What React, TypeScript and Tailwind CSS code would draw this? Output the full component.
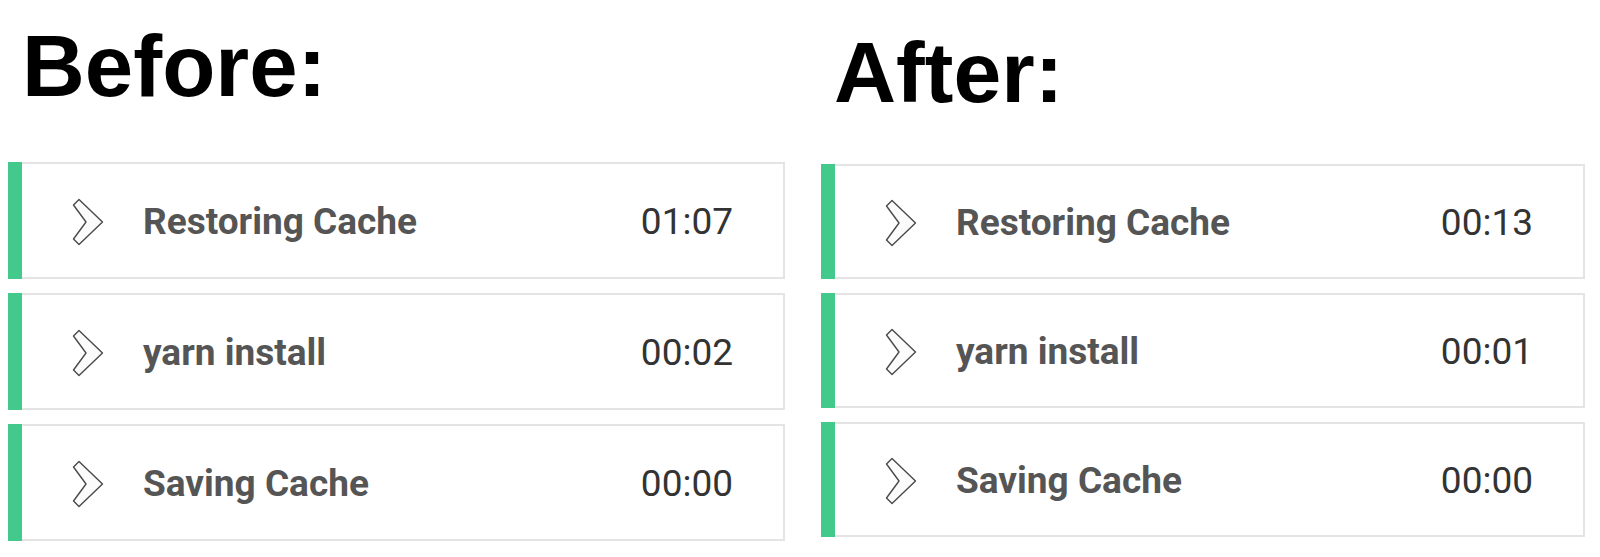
import React from 'react';

interface Step {
  name: string;
  time: string;
}

const before: Step[] = [
  { name: 'Restoring Cache', time: '01:07' },
  { name: 'yarn install', time: '00:02' },
  { name: 'Saving Cache', time: '00:00' },
];

const after: Step[] = [
  { name: 'Restoring Cache', time: '00:13' },
  { name: 'yarn install', time: '00:01' },
  { name: 'Saving Cache', time: '00:00' },
];

const Chevron: React.FC = () => (
  <svg width="32" height="48" viewBox="0 0 32 48" className="shrink-0">
    <polygon
      points="1.5,7 7,1.5 30.5,24 7,46.5 1.5,41 14,24"
      fill="#fbfbfb"
      stroke="#4a4a4a"
      strokeWidth="1.4"
      strokeLinejoin="round"
    />
  </svg>
);

const StepRow: React.FC<{ step: Step; tall: boolean }> = ({ step, tall }) => (
  <div className={`flex ${tall ? 'h-[117px]' : 'h-[115px]'}`}>
    <div className="w-[14px] shrink-0 bg-[#43c98b]" />
    <div className="flex flex-1 items-center border-y-2 border-r-2 border-[#e4e4e4] bg-white pl-[50px] pr-[50px] pt-[3px]">
      <Chevron />
      <span className="ml-[39px] flex-1 text-[37px] font-bold text-[#555555] [font-family:Roboto,sans-serif]">
        {step.name}
      </span>
      <span className="text-[37px] text-[#333333] [font-family:Roboto,sans-serif]">{step.time}</span>
    </div>
  </div>
);

const App: React.FC = () => {
  return (
    <div className="flex h-[557px] w-[1600px] bg-white">
      <div className="ml-[8px] w-[777px]">
        <h1 className="mt-[22px] pl-[14px] text-[87px] font-bold leading-none text-black [font-family:'Liberation_Sans',Arial,sans-serif]">
          Before:
        </h1>
        <div className="mt-[53px] flex flex-col gap-[14px]">
          {before.map((s) => (
            <StepRow key={s.name} step={s} tall />
          ))}
        </div>
      </div>
      <div className="ml-[36px] w-[764px]">
        <h1 className="mt-[29px] pl-[13px] text-[86px] font-bold leading-none text-black [font-family:'Liberation_Sans',Arial,sans-serif]">
          After:
        </h1>
        <div className="mt-[49px] flex flex-col gap-[14px]">
          {after.map((s) => (
            <StepRow key={s.name} step={s} tall={false} />
          ))}
        </div>
      </div>
    </div>
  );
};

export default App;
